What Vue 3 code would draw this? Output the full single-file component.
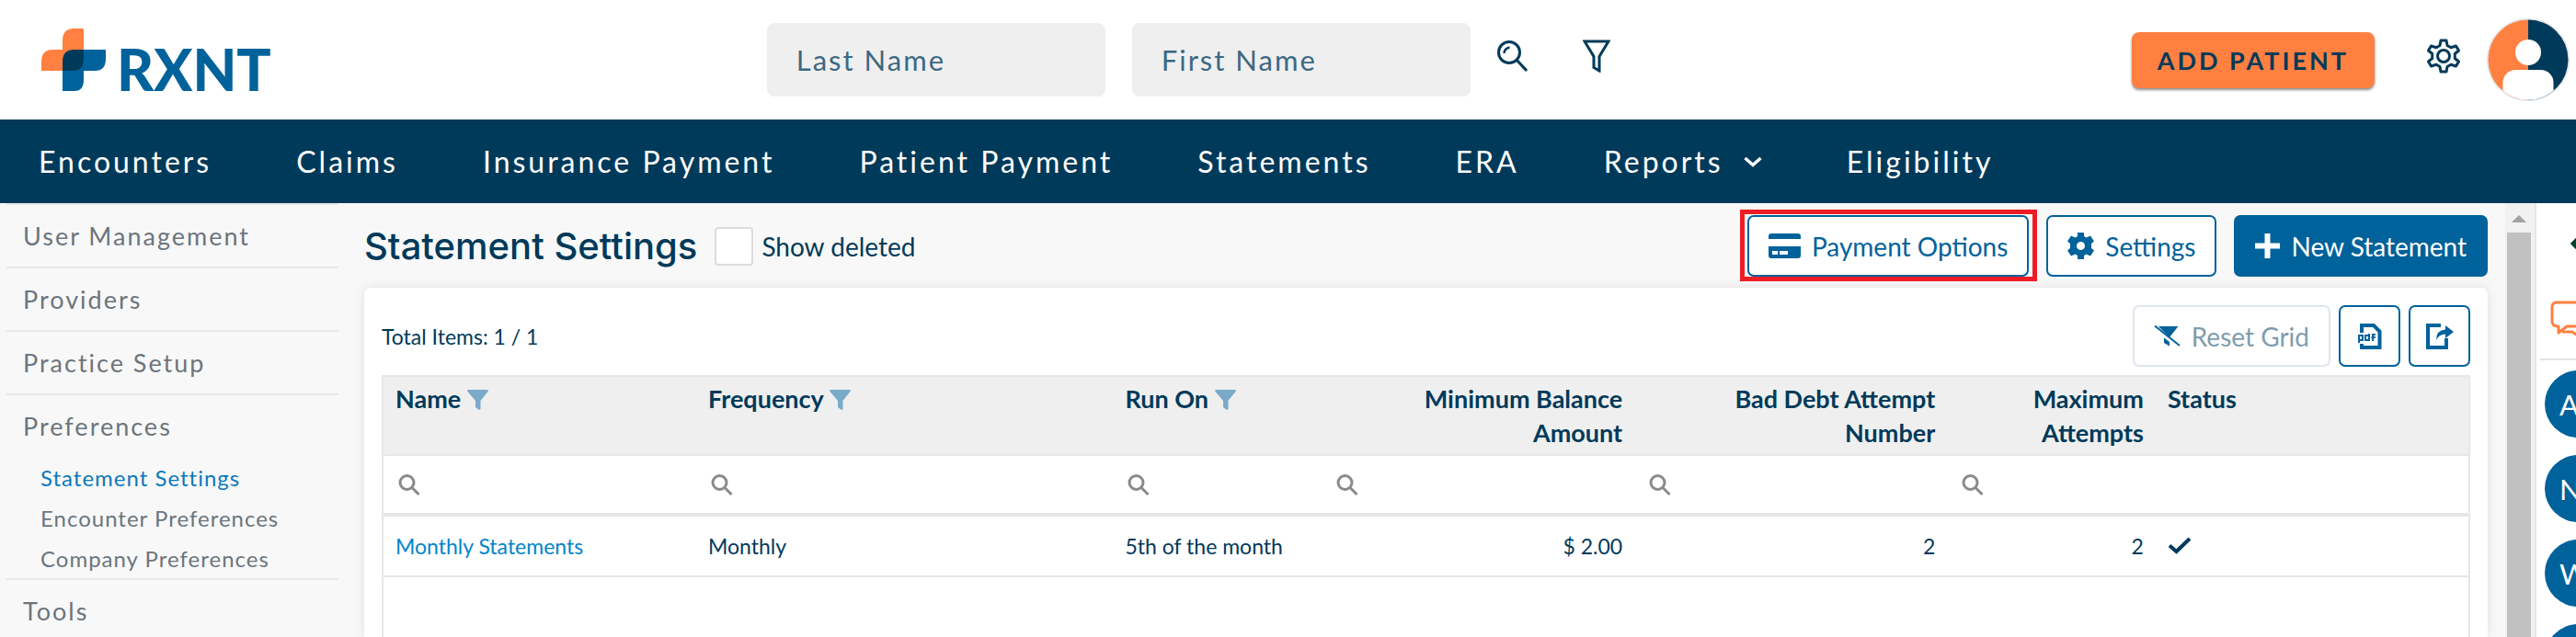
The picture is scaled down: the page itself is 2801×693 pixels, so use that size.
<script setup>
import { ref } from 'vue'

const navItems = [
  { label: 'Encounters' },
  { label: 'Claims' },
  { label: 'Insurance Payment' },
  { label: 'Patient Payment' },
  { label: 'Statements' },
  { label: 'ERA' },
  { label: 'Reports', menu: true },
  { label: 'Eligibility' },
]

const sections = [
  { label: 'User Management' },
  { label: 'Providers' },
  { label: 'Practice Setup' },
  {
    label: 'Preferences',
    children: ['Statement Settings', 'Encounter Preferences', 'Company Preferences'],
  },
  { label: 'Tools' },
]

const columns = [
  { key: 'name', label: 'Name', filter: true, search: true },
  { key: 'frequency', label: 'Frequency', filter: true, search: true },
  { key: 'runOn', label: 'Run On', filter: true, search: true },
  { key: 'balance', label: 'Minimum Balance Amount', search: true, numeric: true },
  { key: 'badDebt', label: 'Bad Debt Attempt Number', search: true, numeric: true },
  { key: 'attempts', label: 'Maximum Attempts', search: true, numeric: true },
  { key: 'status', label: 'Status' },
]

const rows = [
  {
    name: 'Monthly Statements',
    frequency: 'Monthly',
    runOn: '5th of the month',
    balance: '$ 2.00',
    badDebt: '2',
    attempts: '2',
    status: true,
  },
]

const contacts = ['A', 'N', 'W', '']
const active = 'Statement Settings'
const lastName = ref('')
const firstName = ref('')
const showDeleted = ref(false)
</script>

<template>
  <div class="app">
    <header class="topbar">
      <a class="logo" href="#">
        <svg class="logo-mark" viewBox="0 0 70 68" aria-hidden="true">
          <path fill="#ff8040" d="M46 46H0V36Q0 23 13 23H23V13Q23 0 36 0H45Q46 0 46 1Z" />
          <path fill="#00629b" d="M23 23H69Q70 23 70 24V33Q70 46 58 46H46V56Q46 68 36 68H23Z" />
          <path fill="#ff8040" d="M23 23H35V36H23Z" />
          <path fill="#003a5a" d="M23 46V36Q23 23 36 23H46V33Q46 46 34 46Z" />
        </svg>
        <span class="logo-text">RXNT</span>
      </a>

      <form class="finder" @submit.prevent>
        <input v-model="lastName" class="finder-input" type="text" placeholder="Last Name" aria-label="Last Name" />
        <input v-model="firstName" class="finder-input" type="text" placeholder="First Name" aria-label="First Name" />
        <button class="icon-btn" type="submit" aria-label="Search">
          <svg width="33" height="34" viewBox="0 0 33 34" fill="none" stroke="#003a5a" stroke-width="3">
            <circle cx="13" cy="13" r="11.5" />
            <path d="M21 21L32 33" />
            <path d="M7.500 14Q8 8.500 13.500 7.500" stroke-width="2.500" />
          </svg>
        </button>
        <button class="icon-btn filter-btn" type="button" aria-label="Filter">
          <svg width="30" height="36" viewBox="0 0 30 36" fill="none" stroke="#003a5a" stroke-width="3">
            <path d="M2 2H28L18 18.500V34L12 30.500V18.500Z" />
          </svg>
        </button>
      </form>

      <div class="account">
        <button class="add-patient" type="button">ADD PATIENT</button>
        <button class="icon-btn gear-btn" type="button" aria-label="Settings">
          <svg width="38" height="38" viewBox="0 0 38 38" fill="none" stroke="#003a5a" stroke-width="3" stroke-linejoin="round">
            <path d="M16 2H22L23 7.500L27 9.800L32.500 8L35.500 13L31.300 16.500V21.500L35.500 25L32.500 30L27 28.200L23 30.500L22 36H16L15 30.500L11 28.200L5.500 30L2.500 25L6.700 21.500V16.500L2.500 13L5.500 8L11 9.800L15 7.500Z" />
            <circle cx="19" cy="19" r="6.500" />
          </svg>
        </button>
        <button class="avatar" type="button" aria-label="Account">
          <svg viewBox="0 0 90 90" aria-hidden="true">
            <defs>
              <clipPath id="face"><circle cx="45" cy="45" r="43.500" /></clipPath>
            </defs>
            <circle cx="45" cy="45" r="44" fill="#fff" stroke="#e2e4e8" stroke-width="2" />
            <g clip-path="url(#face)">
              <rect width="45" height="90" fill="#ff8040" />
              <rect x="45" width="45" height="90" fill="#003a5a" />
              <circle cx="45" cy="37" r="14" fill="#fff" />
              <rect x="17.500" y="56" width="55" height="50" rx="14" fill="#fff" />
            </g>
          </svg>
        </button>
      </div>
    </header>

    <nav class="mainnav" aria-label="Main">
      <a v-for="item in navItems" :key="item.label" class="nav-link" href="#">
        {{ item.label }}
        <svg v-if="item.menu" width="20" height="12" viewBox="0 0 20 12" fill="none" stroke="#fff" stroke-width="3.500">
          <path d="M1.500 2L10 9.500L18.500 2" />
        </svg>
      </a>
    </nav>

    <div class="body">
      <aside class="sidebar">
        <section v-for="s in sections" :key="s.label" class="side-section">
          <a class="side-link" href="#">{{ s.label }}</a>
          <a
            v-for="c in s.children"
            :key="c"
            class="side-sub"
            :class="{ current: c === active }"
            href="#"
          >{{ c }}</a>
        </section>
      </aside>

      <main class="main">
        <div class="page-head">
          <h1 class="title">Statement Settings</h1>
          <input id="show-deleted" v-model="showDeleted" class="check" type="checkbox" />
          <label class="check-label" for="show-deleted">Show deleted</label>
          <div class="actions">
            <div class="marked">
              <button class="btn" type="button">
                <svg width="35" height="27" viewBox="0 0 35 27" fill="#00629b">
                  <path d="M3 0H32Q35 0 35 3V6H0V3Q0 0 3 0Z" />
                  <path fill-rule="evenodd" d="M0 14H35V24Q35 27 32 27H3Q0 27 0 24ZM4 19V23H10V19ZM12 19V23H21V19Z" />
                </svg>
                Payment Options
              </button>
            </div>
            <button class="btn" type="button">
              <svg width="29" height="29" viewBox="0 0 29 29" fill="#00629b">
                <path fill-rule="evenodd" d="M11 0H18V4L20.500 5.500L25 3.500L29 9.500L26 12V17L29 19.500L25 25.500L20.500 23.500L18 25V29H11V25L8.500 23.500L4 25.500L0 19.500L3 17V12L0 9.500L4 3.500L8.500 5.500L11 4ZM14.500 10A4.500 4.500 0 1 0 14.500 19A4.500 4.500 0 1 0 14.500 10Z" />
              </svg>
              Settings
            </button>
            <button class="btn primary" type="button">
              <svg width="27" height="27" viewBox="0 0 27 27" fill="none" stroke="#fff" stroke-width="6">
                <path d="M13.500 0V27M0 13.500H27" />
              </svg>
              New Statement
            </button>
          </div>
        </div>

        <div class="card">
          <div class="grid-head">
            <span class="total">Total Items: 1 / 1</span>
            <button class="btn" type="button" disabled>
              <svg width="29" height="23" viewBox="0 0 29 23" fill="#00629b">
                <path d="M5 1H26.500L17 13Z" />
                <path d="M11 13.500L17 18V22.500L11 19Z" />
                <path d="M1 0.500L28 22" stroke="#00629b" stroke-width="2" />
              </svg>
              Reset Grid
            </button>
            <button class="btn square" type="button" aria-label="Export to PDF">
              <svg width="26" height="28" viewBox="0 0 26 28" fill="none" stroke="#00629b">
                <path stroke-width="4" d="M4 10V2H17L23.500 8.500V26H4V22" />
                <path stroke-width="2" d="M1 21V13H5V18H1M12 11V18H8V13H12M16 19V12H19M14.500 15H19" />
              </svg>
            </button>
            <button class="btn square" type="button" aria-label="Export">
              <svg width="30" height="28" viewBox="0 0 30 28">
                <path fill="none" stroke="#00629b" stroke-width="4" d="M16 2H2V26H22V16" />
                <path fill="#00629b" d="M21 2L30 9L21 16V11.500Q14 11.500 11 18Q11 7 21 6.500Z" />
              </svg>
            </button>
          </div>

          <div class="grid">
            <table class="table">
              <colgroup>
                <col class="c15" />
                <col class="c20" />
                <col class="c10" />
                <col class="c15" />
                <col class="c15" />
                <col class="c10" />
                <col class="c15" />
              </colgroup>
              <thead>
                <tr class="labels">
                  <th v-for="col in columns" :key="col.key" scope="col" :class="{ num: col.numeric }">
                    {{ col.label }}
                    <svg v-if="col.filter" width="23" height="22" viewBox="0 0 23 22" fill="#7aaaca">
                      <path d="M1 0H22Q23.500 0.500 22.500 2L14.500 12V21L13 22L9 19V12L0.500 2Q-0.500 0.500 1 0Z" />
                    </svg>
                  </th>
                </tr>
                <tr class="filters">
                  <td v-for="col in columns" :key="col.key">
                    <label v-if="col.search" class="filter">
                      <svg width="24" height="23" viewBox="0 0 24 23" fill="none" stroke="#8a8a8a" stroke-width="3">
                        <circle cx="9.500" cy="9" r="7.500" />
                        <path d="M14.500 14L22.500 22" />
                      </svg>
                      <input class="filter-input" type="text" :aria-label="'Filter ' + col.label" />
                    </label>
                  </td>
                </tr>
              </thead>
              <tbody>
                <tr v-for="row in rows" :key="row.name">
                  <td v-for="col in columns" :key="col.key" :class="{ num: col.numeric }">
                    <a v-if="col.key === 'name'" class="link" href="#">{{ row.name }}</a>
                    <svg v-else-if="col.key === 'status'" width="26" height="19" viewBox="0 0 26 19" fill="none" stroke="#003a5a" stroke-width="4" role="img" aria-label="Active">
                      <path d="M2 9.500L9.500 16L24 2" />
                    </svg>
                    <template v-else>{{ row[col.key] }}</template>
                  </td>
                </tr>
              </tbody>
            </table>
          </div>
        </div>
      </main>

      <div class="scrollbar" aria-hidden="true">
        <svg width="16" height="8" viewBox="0 0 16 8" fill="#a3a3a3"><path d="M8 0L16 8H0Z" /></svg>
        <div class="thumb"></div>
      </div>

      <aside class="dock">
        <div class="dock-head">
          <button class="dock-toggle" type="button" aria-label="Expand panel">
            <svg width="22" height="28" viewBox="0 0 22 28" fill="none" stroke="#003d2b" stroke-width="6"><path d="M18 0L4 14L18 28" /></svg>
          </button>
          <button class="dock-chat" type="button" aria-label="Messages">
            <svg width="60" height="46" viewBox="0 0 60 46" fill="none" stroke="#ff8040" stroke-width="3" stroke-linejoin="round">
              <path d="M8 28Q2 28 2 22V7Q2 2 7 2H38Q43 2 43 7V22Q43 28 38 28H18L9 35V28Z" />
              <path d="M13 34H24Q28 38 34 38H44L53 44V37Q58 36 58 31V19Q58 14 53 14H43" />
            </svg>
          </button>
        </div>
        <button v-for="(c, i) in contacts" :key="i" class="contact" type="button">{{ c }}</button>
      </aside>
    </div>
  </div>
</template>

<style>
html,
body {
  margin: 0;
  height: 100%;
  overflow: hidden;
}

#app {
  height: 100%;
}
</style>

<style scoped>
.app {
  display: flex;
  flex-direction: column;
  height: 100%;
  background: #fff;
  color: #003a5a;
  font-family: Lato, 'Open Sans', sans-serif;
  font-size: 28px;
}

* {
  box-sizing: border-box;
}

a {
  color: inherit;
  text-decoration: none;
}

button {
  margin: 0;
  padding: 0;
  border: 0;
  background: none;
  color: inherit;
  font: inherit;
  cursor: pointer;
}

svg {
  flex: none;
}

.topbar {
  display: flex;
  flex: none;
  align-items: center;
  justify-content: space-between;
  height: 130px;
  padding: 0 9px 0 45px;
}

.logo {
  display: flex;
  align-items: baseline;
  gap: 12px;
}

.logo-mark {
  width: 70px;
  height: 68px;
}

.logo-text {
  color: #00629b;
  font-size: 62px;
  font-weight: 900;
  line-height: 48px;
}

.finder {
  display: flex;
  align-items: center;
  gap: 29px;
  padding-right: 28px;
}

.finder-input {
  width: 368px;
  height: 80px;
  padding: 0 32px;
  border: 0;
  border-radius: 8px;
  background: #efefef;
  color: #003a5a;
  font: 400 31px Lato, 'Open Sans', sans-serif;
  letter-spacing: 2px;
}

.finder-input::placeholder {
  color: #3d6883;
  opacity: 1;
}

.icon-btn {
  display: flex;
  padding-bottom: 8px;
}

.filter-btn {
  margin-left: 31px;
}

.account {
  display: flex;
  align-items: center;
  gap: 28px;
}

.add-patient {
  height: 61px;
  padding: 0 28px;
  border-radius: 8px;
  background: #ff8040;
  box-shadow: 0 2px 3px rgba(0, 0, 0, 0.45);
  font-size: 27px;
  font-weight: 700;
  letter-spacing: 3px;
}

.gear-btn {
  margin-left: 28px;
}

.avatar {
  display: flex;
  width: 88px;
  height: 90px;
}

.mainnav {
  display: flex;
  flex: none;
  align-items: center;
  gap: 92px;
  height: 91px;
  padding: 0 42px;
  background: #003a5a;
  color: #fff;
}

.nav-link {
  display: flex;
  align-items: center;
  gap: 22px;
  font-size: 32px;
  letter-spacing: 3px;
  white-space: nowrap;
}

.body {
  display: flex;
  flex: 1;
  min-height: 0;
  background: #f8f8f8;
}

.sidebar {
  flex: none;
  width: 376px;
  padding: 0 8px 0 7px;
  overflow: hidden;
  color: #6c757d;
}

.side-section {
  border-top: 2px solid #e8e8e8;
}

.side-link,
.side-sub {
  display: flex;
  align-items: center;
}

.side-link {
  height: 67px;
  padding-left: 18px;
  font-size: 27px;
  letter-spacing: 2px;
}

.side-sub {
  height: 44px;
  padding-left: 37px;
  font-size: 24px;
  letter-spacing: 1px;
}

.side-sub.current {
  color: #0a78bd;
}

.main {
  display: flex;
  flex: 1;
  flex-direction: column;
  min-width: 0;
  padding: 13px 19px 0 20px;
}

.page-head {
  display: flex;
  flex: none;
  align-items: center;
  height: 67px;
  margin-bottom: 12px;
}

.title {
  margin: 0 19px 0 0;
  font-family: Inter, 'Open Sans', sans-serif;
  font-size: 40px;
  font-weight: 500;
  white-space: nowrap;
}

.check {
  width: 42px;
  height: 42px;
  margin: 0 9px 0 0;
  border: 2px solid #dcdcdc;
  border-radius: 4px;
  background: #fff;
  appearance: none;
}

.check:checked {
  background: #00629b;
}

.actions {
  display: flex;
  gap: 19px;
  margin-left: auto;
}

.btn {
  display: flex;
  align-items: center;
  justify-content: center;
  gap: 12px;
  height: 67px;
  padding: 0 21px;
  border: 2px solid #00629b;
  border-radius: 7px;
  background: #fff;
  color: #00629b;
  white-space: nowrap;
}

.btn.primary {
  background: #00629b;
  color: #fff;
}

.btn:disabled {
  border-color: #dfe6ed;
  color: #809cad;
  cursor: default;
}

.btn.square {
  width: 67px;
  padding: 0;
}

.marked {
  position: relative;
}

.marked::after {
  position: absolute;
  inset: -6px -9px -5px -8px;
  border: 5px solid #ee1c25;
  content: '';
  pointer-events: none;
}

.card {
  display: flex;
  flex: 1;
  flex-direction: column;
  min-height: 0;
  padding: 19px 19px 0;
  border-radius: 7px 7px 0 0;
  background: #fff;
  box-shadow: 0 0 12px rgba(0, 0, 0, 0.1);
}

.grid-head {
  display: flex;
  flex: none;
  align-items: center;
  gap: 9px;
  margin-bottom: 9px;
}

.total {
  margin-right: auto;
  font-size: 23px;
}

.grid {
  flex: 1;
  min-height: 0;
  border: 2px solid #e7e7e7;
  border-bottom: 0;
}

.table {
  width: 100%;
  border-spacing: 0;
  table-layout: fixed;
}

.c10 {
  width: 10%;
}

.c15 {
  width: 15%;
}

.c20 {
  width: 20%;
}

.labels th {
  padding: 5px 13px;
  border-bottom: 2px solid #e7e7e7;
  background: #efefef;
  font-size: 27px;
  font-weight: 700;
  line-height: 37px;
  text-align: left;
  vertical-align: top;
}

.labels svg {
  vertical-align: -2px;
}

.table .num {
  text-align: right;
}

.filters td {
  height: 66px;
  padding: 0 16px;
  border-bottom: 4px solid #e7e7e7;
}

.filter {
  display: flex;
  align-items: center;
  gap: 8px;
}

.filter-input {
  width: 100%;
  min-width: 0;
  height: 44px;
  padding: 0;
  border: 0;
  outline: 0;
  background: none;
  color: inherit;
  font: inherit;
}

tbody td {
  height: 66px;
  padding: 0 13px;
  border-bottom: 2px solid #e7e7e7;
  font-size: 23px;
}

.link {
  color: #0085ca;
}

.scrollbar {
  display: flex;
  flex: none;
  flex-direction: column;
  align-items: center;
  gap: 11px;
  width: 34px;
  padding: 13px 4px 0 2px;
  border-right: 2px solid #e6e6e6;
  background: #f1f1f1;
}

.thumb {
  flex: 1;
  width: 100%;
  background: #c1c1c1;
}

.dock {
  display: flex;
  flex: none;
  flex-direction: column;
  align-items: flex-start;
  gap: 19px;
  width: 43px;
  overflow: hidden;
  background: #fff;
}

.dock-head {
  display: flex;
  flex: none;
  flex-direction: column;
  align-items: flex-start;
  gap: 48px;
  width: 90px;
  height: 171px;
  margin: 0 0 -8px 4px;
  padding: 30px 0 0 11px;
  border-bottom: 2px solid #e2e2e2;
}

.dock-toggle {
  display: flex;
  padding-left: 22px;
}

.dock-chat {
  display: flex;
}

.contact {
  flex: none;
  width: 73px;
  height: 73px;
  margin-left: 9px;
  padding-left: 16px;
  border-radius: 50%;
  background: #00629b;
  color: #fff;
  font-size: 31px;
  text-align: left;
}
</style>
